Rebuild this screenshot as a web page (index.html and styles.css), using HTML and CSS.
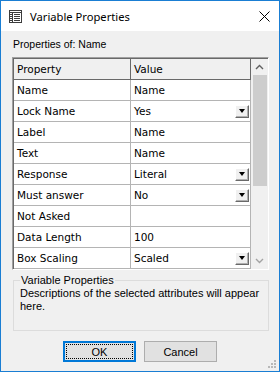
FILE: index.html
```html
<!DOCTYPE html>
<html>
<head>
<meta charset="utf-8">
<link rel="stylesheet" href="styles.css">
</head>
<body>
<div class="window">
  <div class="titlebar">
    <svg class="appicon" width="15" height="15" viewBox="0 0 15 15">
      <rect x="1.5" y="1.5" width="12" height="12" fill="none" stroke="#3c3c3c"/>
      <line x1="1.5" y1="3.5" x2="13.5" y2="3.5" stroke="#3c3c3c"/>
      <line x1="4.5" y1="3.5" x2="4.5" y2="13.5" stroke="#3c3c3c"/>
      <line x1="6" y1="5.5" x2="12" y2="5.5" stroke="#3c3c3c"/>
      <line x1="6" y1="7.5" x2="12" y2="7.5" stroke="#3c3c3c"/>
      <line x1="6" y1="9.5" x2="12" y2="9.5" stroke="#3c3c3c"/>
      <line x1="6" y1="11.5" x2="12" y2="11.5" stroke="#3c3c3c"/>
      <line x1="2" y1="5.5" x2="4" y2="5.5" stroke="#3c3c3c"/>
      <line x1="2" y1="7.5" x2="4" y2="7.5" stroke="#3c3c3c"/>
      <line x1="2" y1="9.5" x2="4" y2="9.5" stroke="#3c3c3c"/>
      <line x1="2" y1="11.5" x2="4" y2="11.5" stroke="#3c3c3c"/>
    </svg>
    <span class="title">Variable Properties</span>
    <svg class="close" width="11" height="11" viewBox="0 0 11 11">
      <path d="M0.5 0.5 L10.5 10.5 M10.5 0.5 L0.5 10.5" stroke="#000" stroke-width="1"/>
    </svg>
  </div>
  <div class="body">
    <div class="caption">Properties of: Name</div>
    <div class="grid">
      <div class="table">
        <div class="row head"><div class="c1">Property</div><div class="c2">Value</div></div>
        <div class="row"><div class="c1">Name</div><div class="c2">Name</div></div>
        <div class="row"><div class="c1">Lock Name</div><div class="c2 combo"><span>Yes</span><span class="dd"><i></i></span></div></div>
        <div class="row"><div class="c1">Label</div><div class="c2">Name</div></div>
        <div class="row"><div class="c1">Text</div><div class="c2">Name</div></div>
        <div class="row"><div class="c1">Response</div><div class="c2 combo"><span>Literal</span><span class="dd"><i></i></span></div></div>
        <div class="row"><div class="c1">Must answer</div><div class="c2 combo"><span>No</span><span class="dd"><i></i></span></div></div>
        <div class="row"><div class="c1">Not Asked</div><div class="c2"></div></div>
        <div class="row"><div class="c1">Data Length</div><div class="c2">100</div></div>
        <div class="row"><div class="c1">Box Scaling</div><div class="c2 combo"><span>Scaled</span><span class="dd"><i></i></span></div></div>
      </div>
      <div class="scrollbar">
        <div class="sbtn">
          <svg width="9" height="6" viewBox="0 0 9 6"><path d="M1 5 L4.5 1.5 L8 5" fill="none" stroke="#606060" stroke-width="1.4"/></svg>
        </div>
        <div class="thumb"></div>
        <div class="track"></div>
        <div class="sbtn">
          <svg width="9" height="6" viewBox="0 0 9 6"><path d="M1 1 L4.5 4.5 L8 1" fill="none" stroke="#a3a3a3" stroke-width="1.4"/></svg>
        </div>
      </div>
    </div>
    <fieldset class="group">
      <legend>Variable Properties</legend>
      <p>Descriptions of the selected attributes will appear here.</p>
    </fieldset>
    <div class="buttons">
      <button class="btn default"><span class="focus">OK</span></button>
      <button class="btn">Cancel</button>
    </div>
  </div>
  <svg class="grip" width="9" height="9" viewBox="0 0 9 9">
    <rect x="6" y="0" width="2" height="2" fill="#b8b8b8"/>
    <rect x="3" y="3" width="2" height="2" fill="#b8b8b8"/>
    <rect x="6" y="3" width="2" height="2" fill="#b8b8b8"/>
    <rect x="0" y="6" width="2" height="2" fill="#b8b8b8"/>
    <rect x="3" y="6" width="2" height="2" fill="#b8b8b8"/>
    <rect x="6" y="6" width="2" height="2" fill="#b8b8b8"/>
  </svg>
</div>
</body>
</html>
```
FILE: styles.css
```css
* { box-sizing: border-box; }
html, body { margin: 0; padding: 0; background: #fff; }
.window {
  position: relative;
  width: 280px;
  height: 372px;
  border: 1px solid #1a7ed3;
  background: #f0f0f0;
  display: flex;
  flex-direction: column;
  font-family: "Liberation Sans", Arial, sans-serif;
  font-size: 11px;
  color: #000;
}
.titlebar {
  height: 30px;
  background: #fff;
  display: flex;
  align-items: center;
  padding-left: 7px;
  flex: none;
}
.appicon { flex: none; margin-right: 7px; }
.title {
  font-family: "Noto Sans", sans-serif;
  font-size: 11.2px;
  color: #000;
}
.close { margin-left: auto; margin-right: 9px; flex: none; }
.body {
  flex: 1;
  display: flex;
  flex-direction: column;
  padding: 7px 10px 0 11px;
}
.caption {
  font-size: 10.5px;
  line-height: 13px;
  padding-left: 1px;
}
.grid {
  margin-top: 6px;
  display: flex;
  border: 1px solid;
  border-color: #a0a0a0 #ffffff #ffffff #a0a0a0;
  background: #fff;
}
.table {
  flex: 1;
  display: flex;
  flex-direction: column;
  border-top: 1px solid #696969;
  border-left: 1px solid #696969;
}
.row {
  display: flex;
  height: 21px;
  border-bottom: 1px solid #b4b4b4;
  font-family: "DejaVu Sans", sans-serif;
  font-size: 10.5px;
}
.row > div {
  display: flex;
  align-items: center;
  padding-left: 3px;
  line-height: 20px;
}
.c1 { width: 117px; border-right: 1px solid #b4b4b4; }
.c2 { flex: 1; border-right: 1px solid #b4b4b4; }
.head { background: #f0f0f0; border-bottom-color: #696969; }
.head .c1, .head .c2 { border-right-color: #696969; }
.combo { justify-content: space-between; padding-right: 1px; }
.dd {
  width: 14px;
  height: 13px;
  background: #f0f0f0;
  border: 1px solid;
  border-color: #ffffff #696969 #696969 #ffffff;
  box-shadow: inset -1px -1px 0 #b0b0b0;
  display: flex;
  align-items: center;
  justify-content: center;
  margin-top: 1px;
}
.dd i {
  width: 0; height: 0;
  border-left: 3.5px solid transparent;
  border-right: 3.5px solid transparent;
  border-top: 4px solid #000;
  margin-left: -1px;
  margin-top: -1px;
}
.scrollbar {
  width: 17px;
  background: #f0f0f0;
  display: flex;
  flex-direction: column;
  border-top: 1px solid #696969;
  flex: none;
}
.sbtn {
  height: 16px;
  display: flex;
  align-items: center;
  justify-content: center;
  flex: none;
}
.thumb {
  height: 111px;
  margin: 0 1px 0 2px;
  background: #cdcdcd;
  flex: none;
}
.track { flex: 1; }
.group {
  margin: 4px 0 0 1px;
  padding: 0 6px 17px 6px;
  border: 1px solid #dcdcdc;
  min-width: 0;
}
.group legend {
  padding: 0 1px;
  font-size: 11px;
  line-height: 13px;
}
.group p {
  margin: 0;
  font-size: 11px;
  line-height: 13px;
}
.buttons {
  margin-top: 10px;
  display: flex;
  justify-content: center;
  gap: 8px;
  padding-right: 1px;
}
.btn {
  width: 73px;
  height: 21px;
  background: #e1e1e1;
  border: 1px solid #adadad;
  font-family: "Liberation Sans", Arial, sans-serif;
  font-size: 11px;
  color: #000;
  padding: 0;
  display: flex;
  align-items: center;
  justify-content: center;
}
.btn.default {
  border: 1px solid #0078d7;
  box-shadow: inset 0 0 0 1px #0078d7;
  padding: 2px;
}
.focus {
  flex: 1;
  align-self: stretch;
  display: flex;
  align-items: center;
  justify-content: center;
  outline: 1px dotted #000;
  outline-offset: -1px;
}
.grip { position: absolute; right: 2px; bottom: 2px; }
```
